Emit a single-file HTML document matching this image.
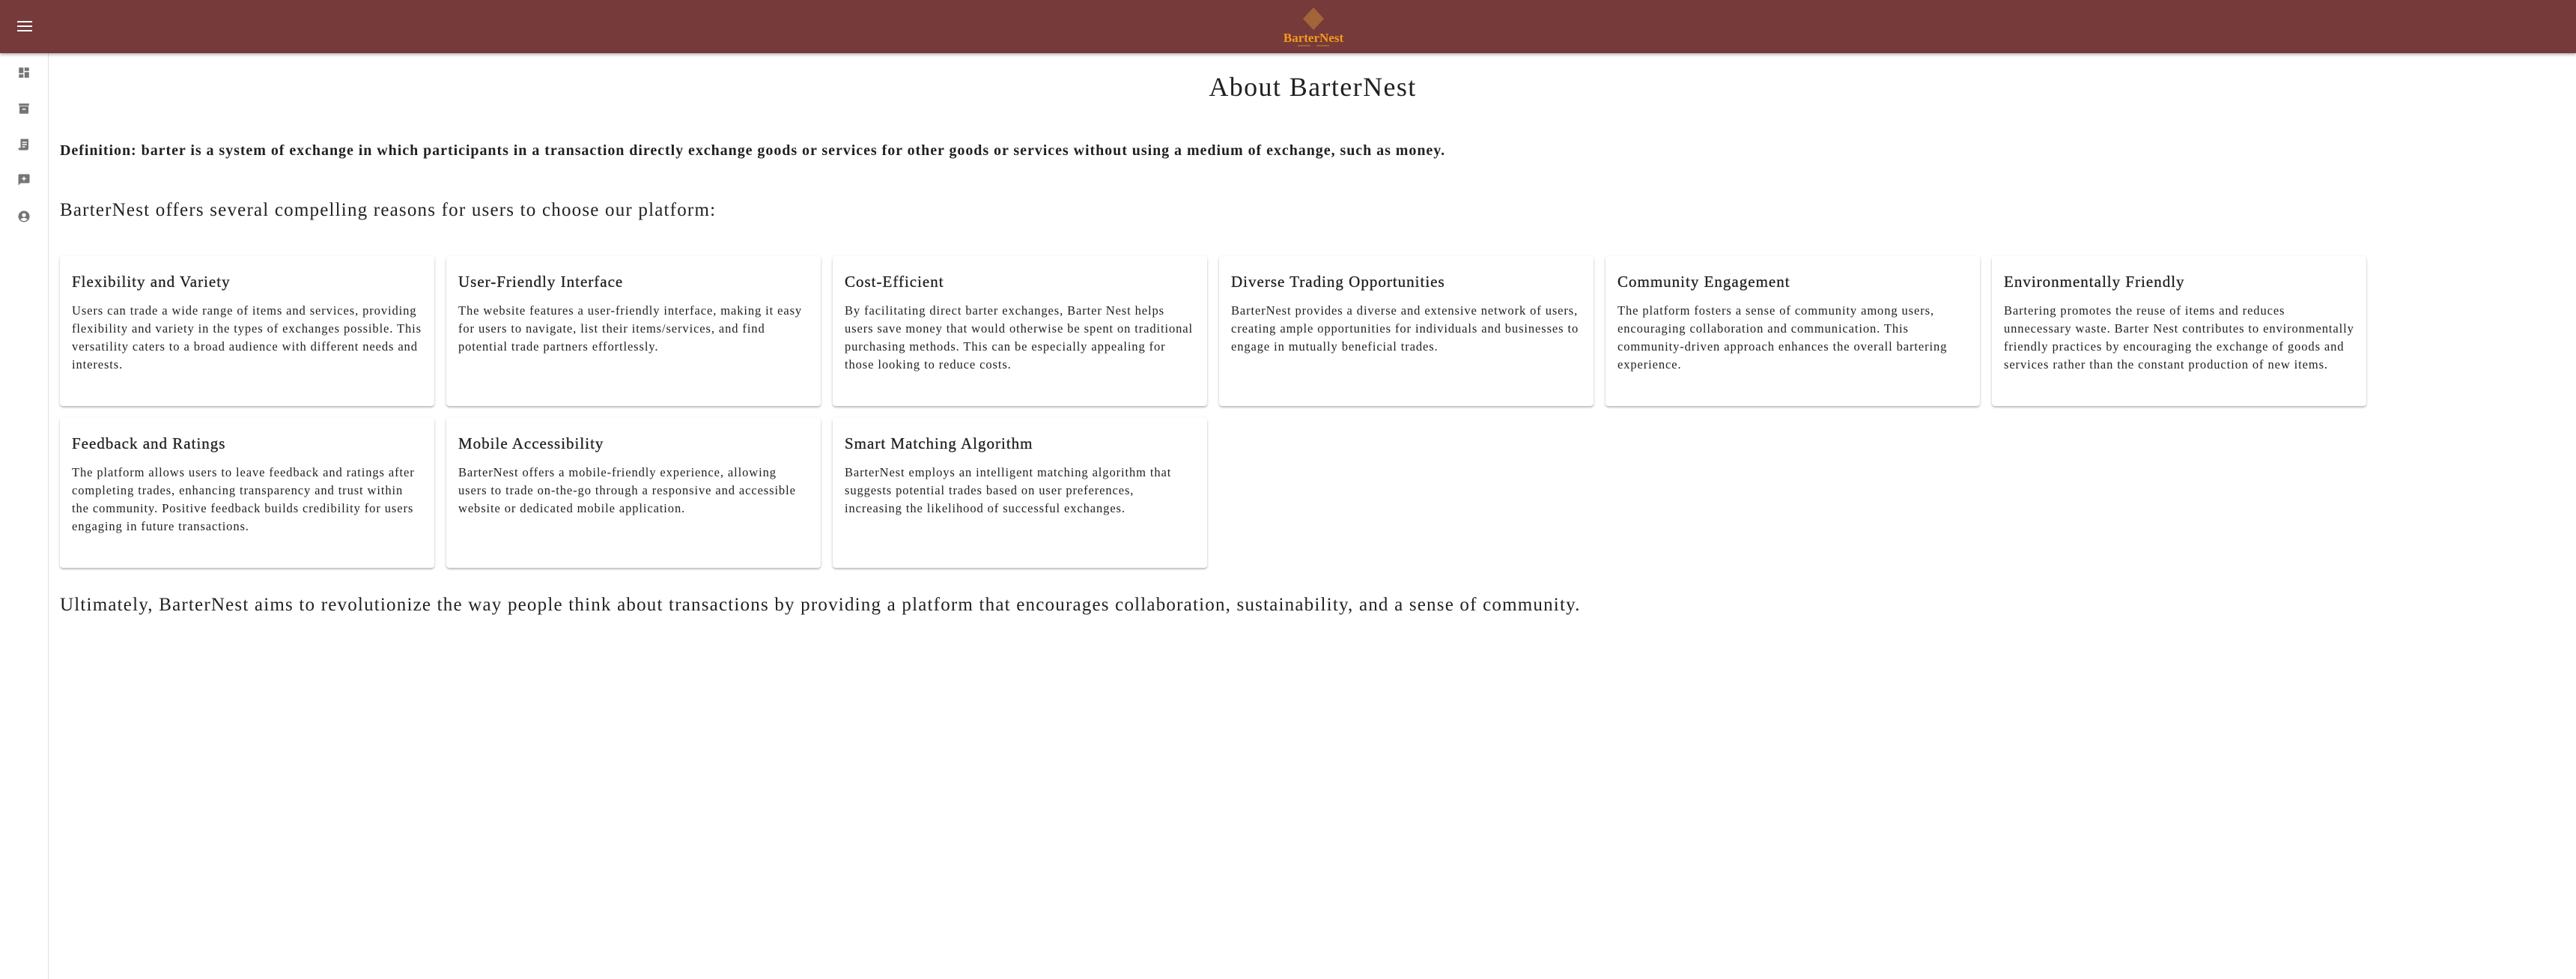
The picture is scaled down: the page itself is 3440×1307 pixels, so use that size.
<!DOCTYPE html>
<html><head><meta charset="utf-8">
<style>
*{box-sizing:border-box;margin:0;padding:0}
html,body{width:3440px;height:1307px;background:#fff;overflow:hidden;font-family:"Liberation Serif",serif;color:#212121}
.hdr{position:absolute;left:0;top:0;width:3440px;height:71px;background:#763a3a;box-shadow:0 2px 4px rgba(0,0,0,.3);z-index:2}
.side{position:absolute;left:0;top:71px;width:65px;height:1236px;border-right:1px solid #e0e0e0;background:#fff}
.ic{position:absolute;left:23px;width:18px;height:18px}
.main{position:absolute;left:80px;top:71px;width:3300px}
h1{font-weight:400;font-size:36px;text-align:center;position:absolute;left:-14px;width:3374px;top:24px;letter-spacing:1.4px}
.def{position:absolute;top:119px;font-weight:700;font-size:20px;letter-spacing:0.95px}
.p2{position:absolute;top:196px;font-size:25px;letter-spacing:1.2px}
.cards{position:absolute;top:271px;width:3110px;display:flex;flex-wrap:wrap;gap:16px}
.card{width:500px;height:200px;border-radius:4px;box-shadow:0 2px 2px rgba(0,0,0,.2),0 1px 4px rgba(0,0,0,.1);padding:16px}
.card h3{font-weight:400;font-size:21px;margin-top:6px;letter-spacing:1px;-webkit-text-stroke:.3px #212121}
.card p{font-size:16.5px;line-height:24px;margin-top:14px;letter-spacing:.9px}
.last{position:absolute;top:723px;font-size:25px;letter-spacing:1.2px}
</style></head><body>
<div class="hdr">
<svg style="position:absolute;left:23px;top:27px" width="20" height="16" viewBox="0 0 20 16"><rect x="0" y="1" width="20" height="2" fill="#fff"/><rect x="0" y="7" width="20" height="2" fill="#fff"/><rect x="0" y="13" width="20" height="2" fill="#fff"/></svg>
<svg style="position:absolute;left:1714px;top:8px" width="80" height="62" viewBox="0 0 80 62">
<polygon points="40,2 54,17 40,32 26,17" fill="#a66a3a" opacity=".9"/>
<text x="40" y="48" text-anchor="middle" font-family="Liberation Serif,serif" font-size="17" font-weight="700" fill="#f59a1b">BarterNest</text>
<line x1="19" y1="53" x2="36" y2="53" stroke="#c08a3a"/><line x1="44" y1="53" x2="61" y2="53" stroke="#c08a3a"/>
</svg>
</div>
<div class="side">
<svg class="ic" style="top:17px" viewBox="0 0 24 24"><path fill="#757575" d="M3 13h8V3H3v10zm0 8h8v-6H3v6zm10 0h8V11h-8v10zm0-18v6h8V3h-8z"/></svg>
<svg class="ic" style="top:65px" viewBox="0 0 24 24"><path fill="#757575" d="M3 3h18v4H3zM4 8h16v12a1 1 0 0 1-1 1H5a1 1 0 0 1-1-1zm5 4v2h6v-2z"/></svg>
<svg class="ic" style="top:113px" viewBox="0 0 24 24"><path fill="#757575" d="M6 2h14v17a3 3 0 0 1-3 3H5a3 3 0 0 1-3-3v-1h4zm3 5v2h8V7zm0 4v2h8v-2zm0 4v2h5v-2z"/></svg>
<svg class="ic" style="top:160px" viewBox="0 0 24 24"><path fill="#757575" d="M20 2H4a2 2 0 0 0-2 2v18l4-4h14a2 2 0 0 0 2-2V4a2 2 0 0 0-2-2zm-8 3 1.3 3.7L17 10l-3.7 1.3L12 15l-1.3-3.7L7 10l3.7-1.3z"/></svg>
<svg class="ic" style="top:209px" viewBox="0 0 24 24"><path fill="#757575" d="M12 2a10 10 0 1 0 0 20 10 10 0 0 0 0-20zm0 4a3.5 3.5 0 1 1 0 7 3.5 3.5 0 0 1 0-7zm0 14a8 8 0 0 1-6-2.8c1.2-1.8 3.5-2.700 6-2.7s4.8.9 6 2.7A8 8 0 0 1 12 20z"/></svg>
</div>
<div class="main">
<h1>About BarterNest</h1>
<div class="def">Definition: barter is a system of exchange in which participants in a transaction directly exchange goods or services for other goods or services without using a medium of exchange, such as money.</div>
<div class="p2">BarterNest offers several compelling reasons for users to choose our platform:</div>
<div class="cards">
<div class="card"><h3>Flexibility and Variety</h3><p>Users can trade a wide range of items and services, providing flexibility and variety in the types of exchanges possible. This versatility caters to a broad audience with different needs and interests.</p></div>
<div class="card"><h3>User-Friendly Interface</h3><p>The website features a user-friendly interface, making it easy for users to navigate, list their items/services, and find potential trade partners effortlessly.</p></div>
<div class="card"><h3>Cost-Efficient</h3><p>By facilitating direct barter exchanges, Barter Nest helps users save money that would otherwise be spent on traditional purchasing methods. This can be especially appealing for those looking to reduce costs.</p></div>
<div class="card"><h3>Diverse Trading Opportunities</h3><p>BarterNest provides a diverse and extensive network of users, creating ample opportunities for individuals and businesses to engage in mutually beneficial trades.</p></div>
<div class="card"><h3>Community Engagement</h3><p>The platform fosters a sense of community among users, encouraging collaboration and communication. This community-driven approach enhances the overall bartering experience.</p></div>
<div class="card"><h3>Environmentally Friendly</h3><p>Bartering promotes the reuse of items and reduces unnecessary waste. Barter Nest contributes to environmentally friendly practices by encouraging the exchange of goods and services rather than the constant production of new items.</p></div>
<div class="card"><h3>Feedback and Ratings</h3><p>The platform allows users to leave feedback and ratings after completing trades, enhancing transparency and trust within the community. Positive feedback builds credibility for users engaging in future transactions.</p></div>
<div class="card"><h3>Mobile Accessibility</h3><p>BarterNest offers a mobile-friendly experience, allowing users to trade on-the-go through a responsive and accessible website or dedicated mobile application.</p></div>
<div class="card"><h3>Smart Matching Algorithm</h3><p>BarterNest employs an intelligent matching algorithm that suggests potential trades based on user preferences, increasing the likelihood of successful exchanges.</p></div>
</div>
<div class="last">Ultimately, BarterNest aims to revolutionize the way people think about transactions by providing a platform that encourages collaboration, sustainability, and a sense of community.</div>
</div>
</body></html>
